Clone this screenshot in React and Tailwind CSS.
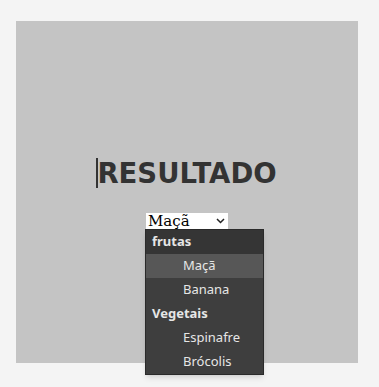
import React from 'react';

const groups = [
  { label: 'frutas', items: ['Maçã', 'Banana'] },
  { label: 'Vegetais', items: ['Espinafre', 'Brócolis'] },
];

function OpenList() {
  return (
    <div className="absolute left-[-1px] top-[16px] w-[119px] bg-[#3e3e3e] border border-[#2a2a2a] shadow-md text-[13px] text-[#e6e6e6] font-['Noto_Sans',sans-serif] z-10">
      {groups.map((g, gi) => (
        <div key={g.label}>
          <div className={`h-[24px] flex items-center pl-[6px] font-bold ${gi === 0 ? 'bg-[#353535]' : ''}`}>
            {g.label}
          </div>
          {g.items.map((it) => (
            <div
              key={it}
              className={`h-[24px] flex items-center pl-[37px] ${it === 'Maçã' ? 'bg-[#575757]' : ''}`}
            >
              {it}
            </div>
          ))}
        </div>
      ))}
    </div>
  );
}

export default function App() {
  return (
    <div className="w-[379px] h-[387px] bg-[#f4f4f4] pt-[21px] pl-[16px]">
      <div className="w-[342px] h-[342px] bg-[#c4c4c4] flex flex-col items-center justify-center">
        <div className="relative flex items-center mt-[2px]">
          <span className="absolute left-[-1px] top-[1px] w-[2px] h-[30px] bg-[#333]" />
          <h1 className="text-[27.5px] leading-[32px] font-bold text-[#333333] font-['DejaVu_Sans',sans-serif]">
            RESULTADO
          </h1>
        </div>
        <div className="relative mt-[24px]">
          <div className="w-[82px] h-[16px] bg-white flex items-center justify-between pl-[2px] pr-[3px] font-['DejaVu_Serif',serif] text-[15px] text-black leading-none">
            <span>Maçã</span>
            <svg width="9" height="6" viewBox="0 0 9 6" fill="none" stroke="#222" strokeWidth="1.5">
              <path d="M1 1l3.5 3.5L8 1" />
            </svg>
          </div>
          <OpenList />
        </div>
      </div>
    </div>
  );
}
